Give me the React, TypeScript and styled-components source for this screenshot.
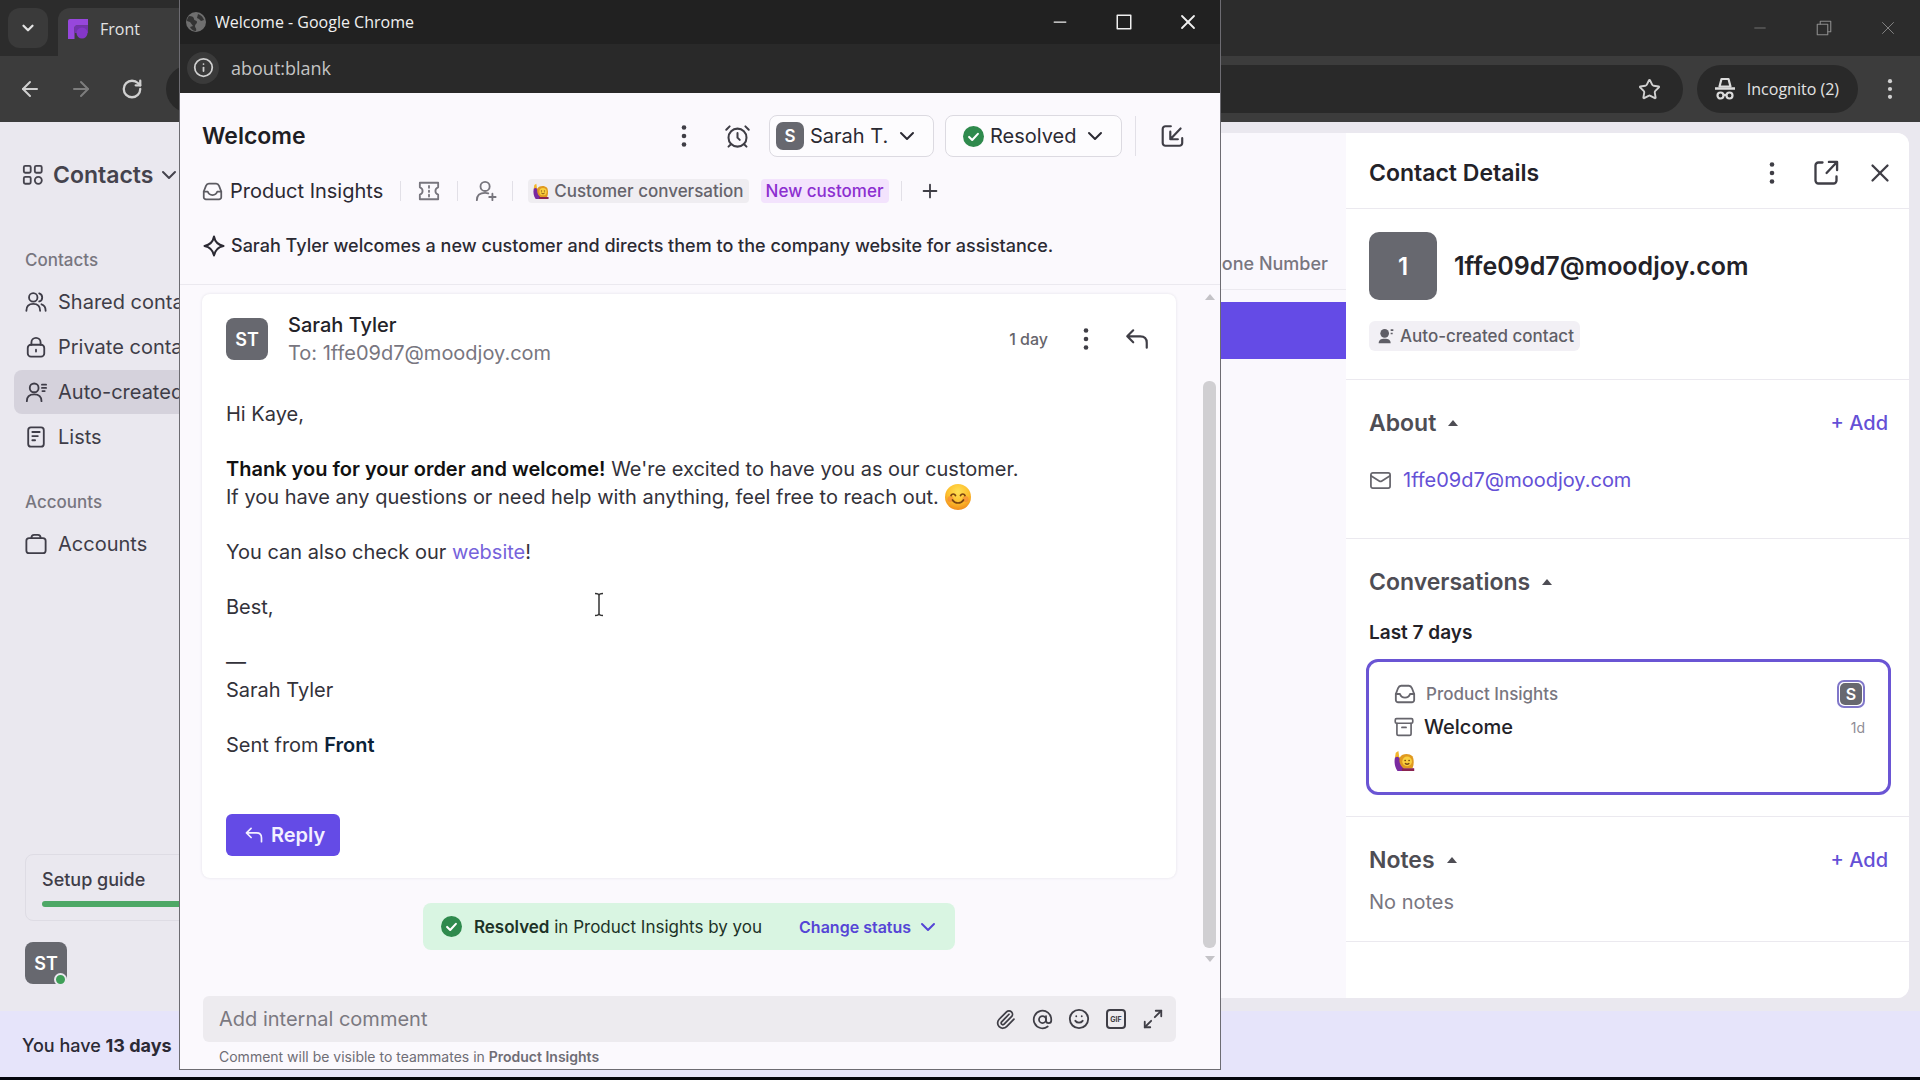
import React from "react";
import styled, { createGlobalStyle, css } from "styled-components";
import {
  AlarmClock, ArrowLeft, ArrowRight, AtSign, ChevronDown, Info, Lock,
  Mail, Maximize2, Minus, Paperclip, Plus, RotateCw, Smile, Square, Star, X,
} from "lucide-react";

const ui = `Inter, "Liberation Sans", sans-serif`;
const chrome = `"Open Sans", "Noto Sans", sans-serif`;
const violet = "#644be6";
const link = "#6450d6";
const ink = "#2b2a33";
const muted = "#78767f";
const rule = "#ebe9ef";

const Global = createGlobalStyle`
  *, *::before, *::after { box-sizing: border-box; }
  body { margin: 0; font-family: ${ui}; font-size: 20px; color: ${ink}; overflow: hidden; }
  button, input, select { font: inherit; color: inherit; }
  h1, h2, h3, p, ul { margin: 0; padding: 0; }
  svg { display: block; flex: none; }
`;

/* ---------- shared parts ---------- */

const IconButton = styled.button<{ $size?: number; $tone?: string }>`
  display: flex; align-items: center; justify-content: center; flex: none;
  width: ${p => p.$size ?? 32}px; height: ${p => p.$size ?? 32}px;
  padding: 0; border: 0; background: none; color: ${p => p.$tone ?? "#3f3e46"};
`;

const Avatar = styled.span<{ $size: number; $font: number; $radius?: number }>`
  position: relative;
  display: flex; align-items: center; justify-content: center; flex: none;
  width: ${p => p.$size}px; height: ${p => p.$size}px;
  border-radius: ${p => p.$radius ?? 8}px;
  background: #67686f; color: #fff; font-size: ${p => p.$font}px; font-weight: 600;
`;

const Spacer = styled.div`flex: 1;`;

type IconProps = { size?: number; w?: number; children?: React.ReactNode };
const Glyph = ({ size = 22, w = 2, children }: IconProps) => (
  <svg width={size} height={size} viewBox="0 0 24 24" fill="none" stroke="currentColor"
    strokeWidth={w} strokeLinecap="round" strokeLinejoin="round">{children}</svg>
);

const Dots = ({ size = 24 }: IconProps) => (
  <svg width={size} height={size} viewBox="0 0 24 24" fill="currentColor">
    <circle cx="12" cy="3.500" r="2.300" /><circle cx="12" cy="12" r="2.300" /><circle cx="12" cy="20.500" r="2.300" />
  </svg>
);
const GridIcon = () => (
  <Glyph size={22}>
    <rect x="2" y="2" width="7.5" height="7.5" rx="1.5" /><rect x="14" y="2" width="7.5" height="7.5" rx="1.5" />
    <rect x="2" y="14" width="7.5" height="7.5" rx="1.5" /><circle cx="17.8" cy="17.8" r="3.8" />
  </Glyph>
);
const SharedIcon = () => (
  <Glyph>
    <circle cx="9" cy="7" r="4.6" /><path d="M1.5 21.5c0-5 3-7.5 7.500-7.500s7.500 2.500 7.500 7.500" />
    <path d="M15.500 2.600a4.600 4.600 0 0 1 0 8.800M18 14.500c3 .8 4.500 3.300 4.500 7" />
  </Glyph>
);
const AutoIcon = () => (
  <Glyph>
    <circle cx="10" cy="7.500" r="4.800" /><path d="M2 22c0-5 3-7.500 8-7.500s8 2.500 8 7.500" />
    <path d="M18.500 4H23M18.500 7.500H23M19 11h2.500" />
  </Glyph>
);
const AddPersonIcon = () => (
  <Glyph>
    <circle cx="11" cy="7" r="5" /><path d="M2 22c0-5 3-8 9-8 1.500 0 2.500.2 3.500.6" /><path d="M19 15v7M15.500 18.500h7" />
  </Glyph>
);
const ListIcon = () => (
  <Glyph><rect x="3.500" y="1.500" width="17" height="21" rx="3" /><path d="M8 6.500h8M8 11h6M8 15.500h3" /></Glyph>
);
const LockIcon = () => (
  <Glyph><rect x="3" y="9.500" width="18" height="13" rx="3.500" /><path d="M7 9.500V7a5 5 0 0 1 10 0v2.500M12 15v2" /></Glyph>
);
const CaseIcon = () => (
  <Glyph><rect x="1.500" y="5.500" width="21" height="16.500" rx="3" /><path d="M7 5.500C7 3 8 2 10 2h4c2 0 3 1 3 3.500" /></Glyph>
);
const InboxIcon = ({ size = 22 }: IconProps) => (
  <Glyph size={size}>
    <path d="M2 12 4.500 5.500C5.200 3.800 6 3 7.800 3h8.400c1.800 0 2.600.8 3.300 2.500L22 12v6.500a2.500 2.500 0 0 1-2.500 2.500h-15A2.500 2.500 0 0 1 2 18.500Z" />
    <path d="M2 12h4.500c1 3 3 4 5.500 4s4.500-1 5.500-4H22" />
  </Glyph>
);
const TicketIcon = () => (
  <Glyph>
    <path d="M2 3h20v5c-2.500.8-3 2.500-3 4s.5 3.200 3 4v5H2v-5c2.500-.8 3-2.500 3-4s-.5-3.200-3-4Z" />
    <path d="M12 6.500v2M12 11.500v1.500M12 16v2" />
  </Glyph>
);
const ArchiveIcon = () => (
  <Glyph size={20}><rect x="1.500" y="2" width="21" height="5.500" rx="1.500" /><path d="M3.500 7.500V20a2 2 0 0 0 2 2h13a2 2 0 0 0 2-2V7.500M9.500 12.500h5" /></Glyph>
);
const SparkIcon = () => (
  <Glyph size={24}><path d="M12 2.500c1 5.500 3.500 8.300 9.500 9.500-6 1.200-8.500 4-9.500 9.500-1-5.500-3.500-8.300-9.500-9.500 6-1.200 8.500-4 9.500-9.500Z" /></Glyph>
);
const PopInIcon = () => (
  <Glyph size={26}><path d="M10 3H5a2.500 2.500 0 0 0-2.500 2.500v13A2.500 2.500 0 0 0 5 21h13a2.500 2.500 0 0 0 2.500-2.500V14M19 5l-9 9.500M9.500 8v7h7" /></Glyph>
);
const PopOutIcon = () => (
  <Glyph size={28}><path d="M9 3H5.500A2.500 2.500 0 0 0 3 5.500v13A2.500 2.500 0 0 0 5.500 21h13a2.500 2.500 0 0 0 2.500-2.500V15M12.500 12 21 3M14.500 2.500H21.500V9.500" /></Glyph>
);
const ReplyIcon = ({ size = 26 }: IconProps) => (
  <Glyph size={size}><path d="M8.500 4 3 9.500 8.500 15M3.500 9.500H15c4 0 6 2 6 6V20" /></Glyph>
);
const CheckDisc = ({ size = 20 }: IconProps) => (
  <svg width={size} height={size} viewBox="0 0 24 24">
    <circle cx="12" cy="12" r="12" fill="#2f8a4d" />
    <path d="m7 12.500 3.500 3.500L17 9" fill="none" stroke="#fff" strokeWidth="2.400" strokeLinecap="round" strokeLinejoin="round" />
  </svg>
);
const WaveIcon = ({ size = 16 }: IconProps) => (
  <svg width={size} height={size} viewBox="0 0 24 24">
    <path d="M5 24V14L1 9 2 3l3-2 1 7 5 2v14Z" fill="#f2b52c" />
    <path d="M1 9c2-2 5-2 6 2l4 10h12v3H4C1 20 0 14 1 9Z" fill="#7a2aa0" />
    <path d="M7 8c2-4 10-5 14-1 2 3 2 10 0 14H11C7 18 5 13 7 8Z" fill="#e09a20" />
    <circle cx="15" cy="13" r="5.500" fill="#f9cf3f" />
    <path d="M12.500 12h.5M17 12h.5M13 15.500c1 1 3 1 4 0" stroke="#7b4a12" strokeWidth="1.500" strokeLinecap="round" fill="none" />
    <path d="M9 22.500h14" stroke="#8b2450" strokeWidth="3" />
  </svg>
);
const Blush = () => (
  <svg width="28" height="28" viewBox="0 0 28 28">
    <defs>
      <radialGradient id="blush" cx="50%" cy="30%" r="70%">
        <stop offset="0" stopColor="#ffe054" /><stop offset=".6" stopColor="#fdbf2d" /><stop offset="1" stopColor="#f08c1c" />
      </radialGradient>
    </defs>
    <circle cx="14" cy="14" r="13" fill="url(#blush)" />
    <circle cx="6.500" cy="16" r="3" fill="#f4743b" opacity=".5" /><circle cx="21.500" cy="16" r="3" fill="#f4743b" opacity=".5" />
    <path d="M7 12.500c1-2 3.500-2 4.500 0M16.500 12.500c1-2 3.500-2 4.500 0M8.500 17c2.500 4 8.500 4 11 0" fill="none" stroke="#7a4310" strokeWidth="1.700" strokeLinecap="round" />
  </svg>
);
const PersonSolid = () => (
  <svg width="16" height="16" viewBox="0 0 24 24" fill="currentColor">
    <circle cx="10" cy="8" r="6.500" /><path d="M1 23c0-5 3-7 9-7s9 2 9 7Z" /><path d="M19 2h4v2.500h-4zM19 7h3v2.500h-3z" />
  </svg>
);
const Caret = () => (
  <svg width="10" height="6" viewBox="0 0 10 6" fill="currentColor"><path d="M5 0 10 6H0Z" /></svg>
);
const IncognitoIcon = () => (
  <svg width="22" height="24" viewBox="0 0 22 24">
    <path d="M5.500 9.500 7.500 2h7l2 7.500Z" fill="none" stroke="#dcdcdc" strokeWidth="2.200" strokeLinejoin="round" />
    <path d="M1 11.500h20" stroke="#dcdcdc" strokeWidth="2.500" />
    <circle cx="6.500" cy="18.500" r="3" fill="none" stroke="#dcdcdc" strokeWidth="2.200" />
    <circle cx="15.500" cy="18.500" r="3" fill="none" stroke="#dcdcdc" strokeWidth="2.200" />
    <path d="M9.500 18h3" stroke="#dcdcdc" strokeWidth="2.200" />
  </svg>
);
const FrontLogo = () => (
  <svg width="20" height="20" viewBox="0 0 20 20">
    <path d="M2 0h18v6.500H8.500A2 2 0 0 0 6.500 8.500V20H0V2a2 2 0 0 1 2-2Z" fill="#9747dc" />
    <path d="M6.500 8.500a2 2 0 0 1 2-2H20V14H6.500Z" fill="#7332ad" />
    <circle cx="14" cy="14" r="5.500" fill="#8437c8" />
  </svg>
);
const Globe = () => (
  <svg width="20" height="20" viewBox="0 0 20 20">
    <circle cx="10" cy="10" r="10" fill="#6f6f6f" />
    <path d="M3 4c3 0 5 1 5 3s3 1 3 3-2 2-2 4 2 2 1 5c-3 0-5-2-6-4l3-1-3-4-3-1c0-2 1-4 2-5ZM12 2c3 1 5 3 6 6l-3 1-2-2-2-1Z" fill="#333" />
  </svg>
);
const IBeam = styled.svg`
  position: absolute; left: 413px; top: 592px;
`;

/* ---------- browser window behind ---------- */

const Screen = styled.div`
  display: flex; flex-direction: column; height: 100vh; position: relative; overflow: hidden;
  background: #eae8ef; border-bottom: 3px solid #05050d;
`;
const TabStrip = styled.div`
  display: flex; align-items: flex-end; height: 56px; flex: none; padding-left: 8px;
  background: #2c2c2c; font-family: ${chrome};
`;
const TabSearch = styled(IconButton)`
  background: #3a3a3a; border-radius: 12px; margin-bottom: 8px;
`;
const Tab = styled.div`
  display: flex; align-items: center; gap: 12px; width: 280px; height: 48px; margin-left: 10px; padding: 0 10px 6px;
  background: #3c3c3c; border-radius: 12px 12px 0 0; color: #e3e3e3; font-size: 16px;
`;
const WindowButtons = styled.div<{ $tone: string }>`
  display: flex; align-items: center; color: ${p => p.$tone};
`;
const WinButton = styled.button`
  display: flex; align-items: center; justify-content: center; width: 64px; height: 44px;
  padding: 0; border: 0; background: none; color: inherit;
`;
const BackButtons = styled(WindowButtons)`padding-bottom: 6px;`;
const Toolbar = styled.div`
  display: flex; align-items: center; height: 66px; flex: none; padding: 0 14px;
  background: #3c3c3c; color: #dcdcdc; font-family: ${chrome};
`;
const NavGroup = styled.div`display: flex; gap: 19px; margin-right: 18px;`;
const Omnibox = styled.div`
  display: flex; align-items: center; justify-content: flex-end; flex: 1; height: 48px;
  padding-right: 17px; border-radius: 24px; background: #292929;
`;
const Incognito = styled.button`
  display: flex; align-items: center; gap: 11px; height: 48px; margin: 0 16px 0 14px; padding: 0 19px 0 17px;
  border: 0; border-radius: 24px; background: #292929; color: #e3e3e3; font-size: 16px;
`;

const Workspace = styled.div`display: flex; flex: 1; min-height: 0;`;

const Sidebar = styled.nav`
  display: flex; flex-direction: column; width: 300px; flex: none; padding: 37px 14px 27px;
  color: #3f3d48;
`;
const AppSwitch = styled.button`
  display: flex; align-items: center; gap: 4px; height: 32px; padding: 0 0 0 8px;
  border: 0; background: none; color: #45434d; font-size: 23px; font-weight: 600;
  svg:first-child { margin-right: 5px; }
`;
const GroupLabel = styled.h2<{ $first?: boolean }>`
  margin: ${p => (p.$first ? 57 : 31)}px 0 8px 11px; font-size: 17px; line-height: 24px; font-weight: 500; color: ${muted};
`;
const NavList = styled.ul`display: flex; flex-direction: column; gap: 1px; list-style: none;`;
const NavItem = styled.a<{ $active?: boolean }>`
  display: flex; align-items: center; gap: 11px; height: 44px; padding: 0 11px; border-radius: 8px;
  color: #3f3d48; text-decoration: none; font-size: 20px; white-space: nowrap;
  ${p => p.$active && css`background: #d5d2dc;`}
`;
const Guide = styled.button`
  display: flex; flex-direction: column; gap: 9px; margin: 0 0 21px 11px; padding: 13px 16px;
  border: 1px solid #dedce4; border-radius: 8px; background: none; text-align: left;
  font-size: 18px; font-weight: 500; line-height: 24px; color: #3f3d48;
`;
const GuideBar = styled.span`display: block; width: 100%; height: 6px; border-radius: 3px; background: #4ea866;`;
const Me = styled.div`margin-left: 11px; display: flex;`;
const Online = styled.span`
  position: absolute; right: 0; bottom: -2px; width: 13px; height: 13px; border-radius: 50%;
  background: #3f9f58; border: 2px solid #eae8ef;
`;

const Panel = styled.main`
  display: flex; flex: 1; margin: 11px 11px 13px 0; border-radius: 12px; overflow: hidden; background: #faf8fd;
`;
const ListArea = styled.section`flex: 1; padding-top: 106px;`;
const ContactTable = styled.table`
  width: 100%; border-collapse: collapse; text-align: right;
  th { height: 50px; padding: 0 18px; font-size: 18px; font-weight: 500; color: ${muted}; border-bottom: 1px solid ${rule}; }
  td { height: 57px; padding: 0; background: ${violet}; }
  tbody::before { content: ""; display: block; height: 12px; }
`;
const Details = styled.aside`
  width: 563px; flex: none; background: #fff;
`;
const DetailsHead = styled.header`
  display: flex; align-items: center; gap: 22px; height: 76px; padding: 4px 13px 0 23px; border-bottom: 1px solid ${rule};
`;
const DetailsTitle = styled.h2`flex: 1; font-size: 23px; font-weight: 600; color: #232228;`;
const Section = styled.section<{ $top?: number; $bottom: number }>`
  padding: ${p => p.$top ?? 29}px 21px ${p => p.$bottom}px 23px; border-bottom: 1px solid ${rule};
`;
const Person = styled.div`display: flex; align-items: center; gap: 17px; margin-bottom: 21px;`;
const PersonName = styled.h1`font-size: 25px; font-weight: 600; color: #232228;`;
const Chip = styled.span`
  display: inline-flex; align-items: center; gap: 6px; height: 30px; padding: 0 6px 0 9px; border-radius: 6px;
  background: #f2f0f5; color: #5f5e66; font-size: 17px; font-weight: 500;
`;
const SectionHead = styled.div`display: flex; align-items: center; justify-content: space-between; height: 28px;`;
const Fold = styled.button`
  display: flex; align-items: center; gap: 12px; padding: 0; border: 0; background: none;
  font-size: 23px; font-weight: 600; line-height: 28px; color: #4e4d54;
`;
const AddButton = styled.button`
  padding: 0; border: 0; background: none; color: ${link}; font-size: 20px; font-weight: 500; line-height: 28px;
`;
const EmailRow = styled.div`
  display: flex; align-items: center; gap: 11px; height: 28px; margin-top: 29px; color: #66656c;
  a { color: ${link}; text-decoration: none; }
`;
const Period = styled.h3`margin: 25px 0 14px; font-size: 19px; line-height: 24px; font-weight: 600; color: #232228;`;
const ConvoCard = styled.article`
  display: flex; flex-direction: column; gap: 5px; margin: 0 -3px; padding: 18px 23px 18px 25px;
  border: 3px solid #6a55d4; border-radius: 12px;
`;
const ConvoRow = styled.div<{ $subject?: boolean }>`
  display: flex; align-items: center; gap: 10px; height: 28px; color: ${p => (p.$subject ? "#232228" : muted)};
  font-size: ${p => (p.$subject ? 20 : 17)}px; font-weight: 500;
  svg { color: #66656c; }
`;
const Ring = styled.span`
  display: flex; padding: 1px; border: 2px solid #8077c9; border-radius: 7px;
`;
const Age = styled.span`font-size: 14px; font-weight: 400; color: #8f8d96;`;
const Empty = styled.p`margin-top: 14px; line-height: 28px; color: ${muted};`;

const Trial = styled.footer`
  height: 66px; flex: none; padding: 2px 22px 0; line-height: 66px; background: #e6e4fa; color: #2b2a35; font-size: 18px; font-weight: 500;
`;

/* ---------- pop-up window in front ---------- */

const Popup = styled.div`
  position: absolute; left: 179px; top: 0; bottom: 7px; width: 1042px;
  display: flex; flex-direction: column; background: #fbf9fd;
  border: 1px solid #6d6c72; border-top: 0;
`;
const PopTitle = styled.div`
  display: flex; align-items: center; gap: 9px; height: 44px; flex: none; padding-left: 6px;
  background: #212121; color: #f0f0f0; font-family: ${chrome}; font-size: 16px;
`;
const PopUrl = styled.div`
  display: flex; align-items: center; gap: 12px; height: 49px; flex: none; padding: 0 0 2px 7px;
  background: #292929; color: #c4c4c4; font-family: ${chrome}; font-size: 18px;
`;
const InfoDot = styled(IconButton)`border-radius: 50%; background: #3a3a3a;`;
const Head = styled.header`
  flex: none; padding: 22px 31px 24px 22px; border-bottom: 1px solid ${rule};
`;
const HeadRow = styled.div`display: flex; align-items: center; height: 42px;`;
const Subject = styled.h1`flex: 1; font-size: 23px; font-weight: 600; color: #1f1e24;`;
const HeadTools = styled.div`display: flex; align-items: center; gap: 21px; margin-right: 16px;`;
const Picker = styled.label<{ $left: number }>`
  display: flex; align-items: center; gap: 6px; height: 42px; margin-right: 11px; padding: 0 14px 0 ${p => p.$left}px;
  border: 1px solid #dcdae1; border-radius: 8px; background: #fdfcfe;
  select { appearance: none; border: 0; padding: 0; background: none; font-size: 20px; color: ${ink}; }
`;
const Bar = styled.span<{ $h: number; $gap: number }>`
  width: 1px; height: ${p => p.$h}px; margin: 0 ${p => p.$gap}px; background: #e2e0e7; flex: none;
`;
const TagRow = styled.div`display: flex; align-items: center; height: 24px; margin: 22px 0 29px; color: #77757d;`;
const InboxName = styled.a`
  display: flex; align-items: center; gap: 7px; color: ${ink}; text-decoration: none;
  svg { color: #5c5b62; }
`;
const Tag = styled.span<{ $violet?: boolean }>`
  display: flex; align-items: center; gap: 5px; height: 24px; padding: 0 5px; margin-right: 12px; border-radius: 4px;
  background: ${p => (p.$violet ? "#f3e3fd" : "#efedf1")}; color: ${p => (p.$violet ? "#8c2fd0" : "#65636b")};
  font-size: 17px; font-weight: 500; white-space: nowrap;
`;
const Summary = styled.p`
  display: flex; align-items: center; gap: 5px; font-size: 18px; font-weight: 500; line-height: 28px; white-space: nowrap;
`;
const Stream = styled.div`display: flex; flex: 1; min-height: 0;`;
const StreamBody = styled.div`
  display: flex; flex-direction: column; align-items: center; gap: 25px; flex: 1; padding: 9px 27px 0 22px;
`;
const ScrollTrack = styled.div`
  display: flex; flex-direction: column; align-items: center; width: 17px; padding: 9px 4px 8px 0; flex: none; color: #c4c3c7;
`;
const TrackGap = styled.div`flex: 81; `;
const Thumb = styled.div`flex: 566; width: 13px; border-radius: 6px; background: #d0cfd2; margin-bottom: 8px;`;
const Message = styled.article`
  width: 100%; padding: 17px 23px 22px 24px; border-radius: 8px; background: #fff;
  box-shadow: 0 0 3px #e2e0e8;
`;
const MailHead = styled.header`display: flex; align-items: center; height: 56px; margin-bottom: 33px;`;
const Who = styled.div`
  flex: 1; margin-left: 20px; line-height: 28px; color: ${muted};
  strong { display: block; font-weight: 500; color: #232228; }
`;
const When = styled.time`margin-right: 22px; font-size: 16px; font-weight: 500; color: #66656c;`;
const Copy = styled.div`
  display: flex; flex-direction: column; gap: 27px; line-height: 28px; color: #33323a;
  strong { font-weight: 600; color: #111; }
  a { color: #7663db; text-decoration: none; }
  svg { display: inline-block; vertical-align: top; }
`;
const Brand = styled.b`font-weight: 600; color: #0c2238;`;
const ReplyButton = styled.button`
  display: flex; align-items: center; gap: 7px; height: 42px; margin-top: 55px; padding: 0 15px 0 18px;
  border: 0; border-radius: 6px; background: ${violet}; color: #f3f0ff; font-weight: 600; font-size: 20px;
`;
const Status = styled.div`
  display: flex; align-items: center; height: 47px; padding: 0 15px 0 18px; border-radius: 8px; background: #d9f5e2;
  font-size: 17px; color: #1d3227; white-space: nowrap;
  p { margin: 0 37px 0 12px; }
  b { font-weight: 600; }
`;
const ChangeStatus = styled.button`
  display: flex; align-items: center; gap: 5px; padding: 0; border: 0; background: none; color: #5545d6; font-size: 16px; font-weight: 600;
`;
const Composer = styled.div`flex: none; padding: 26px 44px 2px 23px;`;
const Field = styled.div`
  display: flex; align-items: center; gap: 5px; height: 46px; padding: 0 7px 0 16px; border-radius: 6px; background: #edebef;
`;
const CommentInput = styled.input`
  flex: 1; min-width: 0; padding: 0; border: 0; background: none; outline: 0;
  &::placeholder { color: #7b7981; opacity: 1; }
`;
const Gif = styled.span`
  display: flex; align-items: center; justify-content: center; width: 20px; height: 20px; border: 2px solid currentColor;
  border-radius: 4px; font-size: 7px; font-weight: 700;
`;
const Hint = styled.p`margin: 5px 0 0 16px; font-size: 14px; line-height: 20px; color: #6f6d75; b { font-weight: 600; }`;

const navContacts = [
  { label: "Shared contacts", icon: <SharedIcon /> },
  { label: "Private contacts", icon: <LockIcon /> },
  { label: "Auto-created", icon: <AutoIcon />, active: true },
  { label: "Lists", icon: <ListIcon /> },
];

export default function App() {
  return (
    <Screen>
      <Global />
      <TabStrip>
        <TabSearch $size={40} $tone="#e3e3e3" aria-label="Search tabs"><ChevronDown size={18} strokeWidth={3} /></TabSearch>
        <Tab><FrontLogo />Front</Tab>
        <Spacer />
        <BackButtons $tone="#8a8a8a">
          <WinButton aria-label="Minimize"><Minus size={18} strokeWidth={1} /></WinButton>
          <WinButton aria-label="Restore">
            <Glyph size={18} w={1.500}><rect x="3" y="7" width="14" height="14" /><path d="M7 7V3h14v14h-4" /></Glyph>
          </WinButton>
          <WinButton aria-label="Close"><X size={22} strokeWidth={1} /></WinButton>
        </BackButtons>
      </TabStrip>
      <Toolbar>
        <NavGroup>
          <IconButton $tone="#d0d0d0" aria-label="Back"><ArrowLeft size={24} /></IconButton>
          <IconButton $tone="#7d7d7d" aria-label="Forward"><ArrowRight size={24} /></IconButton>
          <IconButton $tone="#d0d0d0" aria-label="Reload"><RotateCw size={22} strokeWidth={2.500} /></IconButton>
        </NavGroup>
        <Omnibox><IconButton $tone="#d0d0d0" aria-label="Bookmark"><Star size={23} /></IconButton></Omnibox>
        <Incognito><IncognitoIcon />Incognito (2)</Incognito>
        <IconButton $tone="#d0d0d0" aria-label="Menu"><Dots size={22} /></IconButton>
      </Toolbar>

      <Workspace>
        <Sidebar>
          <AppSwitch><GridIcon />Contacts<ChevronDown size={24} /></AppSwitch>
          <GroupLabel $first>Contacts</GroupLabel>
          <NavList>
            {navContacts.map(n => (
              <li key={n.label}><NavItem href="#" $active={n.active}>{n.icon}{n.label}</NavItem></li>
            ))}
          </NavList>
          <GroupLabel>Accounts</GroupLabel>
          <NavList><li><NavItem href="#"><CaseIcon />Accounts</NavItem></li></NavList>
          <Spacer />
          <Guide>Setup guide<GuideBar /></Guide>
          <Me><Avatar $size={42} $font={18}>ST<Online /></Avatar></Me>
        </Sidebar>

        <Panel>
          <ListArea>
            <ContactTable>
              <thead><tr><th scope="col">Phone Number</th></tr></thead>
              <tbody><tr><td /></tr></tbody>
            </ContactTable>
          </ListArea>
          <Details>
            <DetailsHead>
              <DetailsTitle>Contact Details</DetailsTitle>
              <IconButton aria-label="More"><Dots size={24} /></IconButton>
              <IconButton aria-label="Open in new window"><PopOutIcon /></IconButton>
              <IconButton aria-label="Close details"><X size={30} strokeWidth={1.800} /></IconButton>
            </DetailsHead>
            <Section $top={23} $bottom={28}>
              <Person><Avatar $size={68} $font={24} $radius={10}>1</Avatar><PersonName>1ffe09d7@moodjoy.com</PersonName></Person>
              <Chip><PersonSolid />Auto-created contact</Chip>
            </Section>
            <Section $bottom={44}>
              <SectionHead><Fold>About<Caret /></Fold><AddButton>+ Add</AddButton></SectionHead>
              <EmailRow><Mail size={23} strokeWidth={1.800} /><a href="#">1ffe09d7@moodjoy.com</a></EmailRow>
            </Section>
            <Section $bottom={21}>
              <SectionHead><Fold>Conversations<Caret /></Fold></SectionHead>
              <Period>Last 7 days</Period>
              <ConvoCard>
                <ConvoRow><InboxIcon />Product Insights<Spacer /><Ring><Avatar $size={22} $font={16} $radius={5}>S</Avatar></Ring></ConvoRow>
                <ConvoRow $subject><ArchiveIcon />Welcome<Spacer /><Age>1d</Age></ConvoRow>
                <ConvoRow><WaveIcon size={21} /></ConvoRow>
              </ConvoCard>
            </Section>
            <Section $bottom={25}>
              <SectionHead><Fold>Notes<Caret /></Fold><AddButton>+ Add</AddButton></SectionHead>
              <Empty>No notes</Empty>
            </Section>
          </Details>
        </Panel>
      </Workspace>
      <Trial>You have <b>13 days</b></Trial>

      <Popup role="dialog" aria-label="Welcome">
        <PopTitle>
          <Globe />Welcome - Google Chrome
          <Spacer />
          <WindowButtons $tone="#f0f0f0">
            <WinButton aria-label="Minimize window"><Minus size={20} strokeWidth={1.500} /></WinButton>
            <WinButton aria-label="Maximize window">
              <Glyph size={18}><path d="M3 3h18v18H3Z" /></Glyph>
            </WinButton>
            <WinButton aria-label="Close window"><X size={24} strokeWidth={1.800} /></WinButton>
          </WindowButtons>
        </PopTitle>
        <PopUrl><InfoDot aria-label="Page info" $tone="#d0d0d0"><Info size={21} /></InfoDot>about:blank</PopUrl>

        <Head>
          <HeadRow>
            <Subject>Welcome</Subject>
            <HeadTools>
              <IconButton aria-label="More actions"><Dots size={24} /></IconButton>
              <IconButton aria-label="Snooze"><AlarmClock size={27} strokeWidth={1.800} /></IconButton>
            </HeadTools>
            <Picker $left={6}>
              <Avatar $size={28} $font={17} $radius={7}>S</Avatar>
              <select aria-label="Assignee"><option>Sarah T.</option></select>
              <ChevronDown size={24} />
            </Picker>
            <Picker $left={17}>
              <CheckDisc size={21} />
              <select aria-label="Status"><option>Resolved</option></select>
              <ChevronDown size={24} />
            </Picker>
            <Bar $h={40} $gap={2} />
            <Bar $h={0} $gap={9} />
            <IconButton aria-label="Return to inbox"><PopInIcon /></IconButton>
          </HeadRow>
          <TagRow>
            <InboxName href="#"><InboxIcon size={21} />Product Insights</InboxName>
            <Bar $h={20} $gap={17} /><TicketIcon /><Bar $h={20} $gap={17} /><AddPersonIcon /><Bar $h={20} $gap={15} />
            <Tag><WaveIcon />Customer conversation</Tag>
            <Tag $violet>New customer</Tag>
            <Bar $h={20} $gap={0} />
            <IconButton aria-label="Add tag" $size={56}><Plus size={22} /></IconButton>
          </TagRow>
          <Summary><SparkIcon />Sarah Tyler welcomes a new customer and directs them to the company website for assistance.</Summary>
        </Head>

        <Stream>
          <StreamBody>
            <Message>
              <MailHead>
                <Avatar $size={42} $font={18}>ST</Avatar>
                <Who><strong>Sarah Tyler</strong>To: 1ffe09d7@moodjoy.com</Who>
                <When>1 day</When>
                <IconButton aria-label="Message actions"><Dots size={24} /></IconButton>
                <Bar $h={0} $gap={9} />
                <IconButton aria-label="Reply"><ReplyIcon /></IconButton>
              </MailHead>
              <Copy>
                <p>Hi Kaye,</p>
                <p>
                  <strong>Thank you for your order and welcome!</strong> We're excited to have you as our customer.<br />
                  If you have any questions or need help with anything, feel free to reach out. <Blush />
                </p>
                <p>You can also check our <a href="#">website</a>!</p>
                <p>Best,</p>
                <p>—<br />Sarah Tyler</p>
                <p>Sent from <Brand>Front</Brand></p>
              </Copy>
              <ReplyButton><ReplyIcon size={20} />Reply</ReplyButton>
            </Message>
            <Status>
              <CheckDisc size={21} />
              <p><b>Resolved</b> in Product Insights by you</p>
              <ChangeStatus>Change status<ChevronDown size={24} /></ChangeStatus>
            </Status>
          </StreamBody>
          <ScrollTrack>
            <Caret />
            <TrackGap />
            <Thumb />
            <svg width="10" height="6" viewBox="0 0 10 6" fill="currentColor"><path d="M0 0h10L5 6Z" /></svg>
          </ScrollTrack>
        </Stream>

        <Composer>
          <Field>
            <CommentInput aria-label="Add internal comment" placeholder="Add internal comment" />
            <IconButton aria-label="Attach"><Paperclip size={21} /></IconButton>
            <IconButton aria-label="Mention"><AtSign size={21} /></IconButton>
            <IconButton aria-label="Emoji"><Smile size={22} /></IconButton>
            <IconButton aria-label="Insert GIF"><Gif>GIF</Gif></IconButton>
            <IconButton aria-label="Expand"><Maximize2 size={22} /></IconButton>
          </Field>
          <Hint>Comment will be visible to teammates in <b>Product Insights</b></Hint>
        </Composer>
        <IBeam width="12" height="25" viewBox="0 0 12 25" fill="none" stroke="#333" strokeWidth="1.500">
          <path d="M2 1.500c2 0 4 .5 4 2v18c0 1.500-2 2-4 2M10 1.500c-2 0-4 .5-4 2v18c0 1.500 2 2 4 2" />
        </IBeam>
      </Popup>
    </Screen>
  );
}
